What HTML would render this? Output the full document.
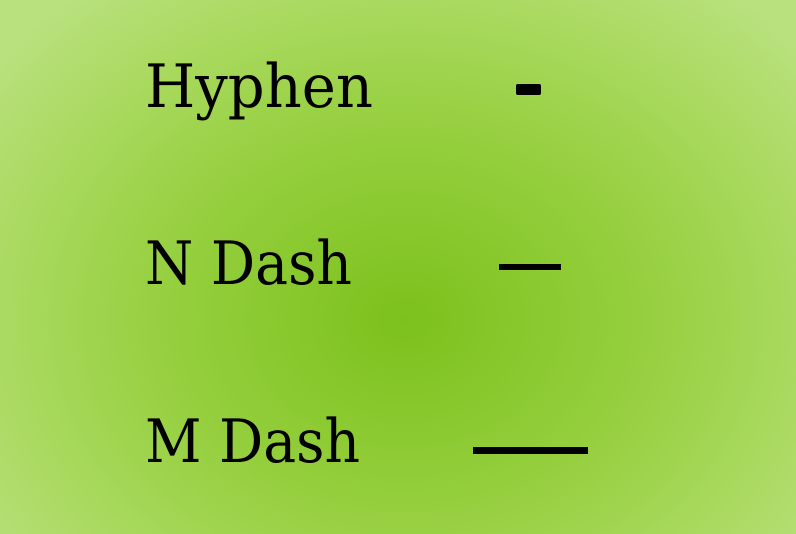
<!DOCTYPE html>
<html><head><style>
html,body{margin:0;padding:0}
body{width:796px;height:534px;overflow:hidden;background:radial-gradient(ellipse 520px 420px at 405px 320px,#7cc11c 0%,#95cf3e 45%,#a9d95e 75%,#b9e17e 100%)}
</style></head><body>
<svg width="796" height="534" style="position:absolute;left:0;top:0">
<g font-family="DejaVu Serif, serif" font-size="60" fill="#000">
<text x="145" y="107" textLength="228" lengthAdjust="spacingAndGlyphs">Hyphen</text>
<text x="145" y="284" textLength="207" lengthAdjust="spacingAndGlyphs">N Dash</text>
<text x="145" y="462" textLength="215" lengthAdjust="spacingAndGlyphs">M Dash</text>
</g>
<rect x="516" y="84" width="25" height="11" rx="2" fill="#000"/>
<rect x="499" y="264" width="62" height="6" fill="#000"/>
<rect x="473" y="447" width="115" height="7" fill="#000"/>
</svg>
</body></html>
